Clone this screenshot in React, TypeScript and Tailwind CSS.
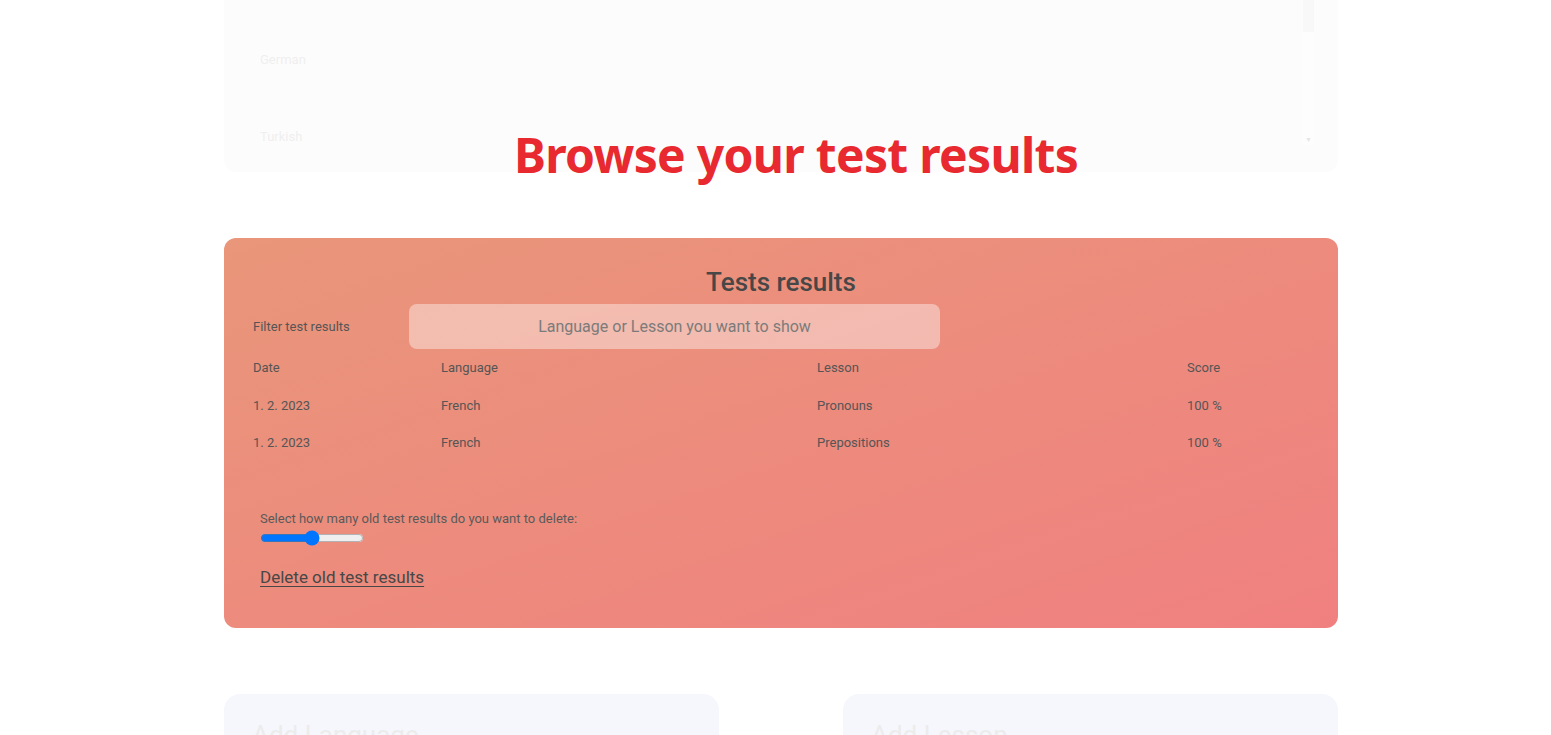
export default function App() {
  const rows = [
    { date: '1. 2. 2023', language: 'French', lesson: 'Pronouns', score: '100 %' },
    { date: '1. 2. 2023', language: 'French', lesson: 'Prepositions', score: '100 %' },
  ]

  return (
    <div className="min-h-[735px] bg-white font-['Roboto',sans-serif] overflow-hidden">
      <div className="w-[1114px] ml-[224px]">
        {/* faded language picker above */}
        <div className="h-[172px] rounded-b-[12px] bg-[#fdfcfc] flex pl-[36px] pr-[24px]">
          <div className="flex-1 flex flex-col text-[13px] text-[#efefef]">
            <div className="h-[21px]" />
            <div className="h-[77px] flex items-center pt-[2px]">German</div>
            <div className="h-[77px] flex items-center pt-[6px]">Turkish</div>
          </div>
          <div className="w-[11px] flex flex-col h-[145px] bg-[#fdfdfd]">
            <div className="h-[32px] bg-[#f8f8f8]" />
            <div className="flex-1" />
            <div className="h-[10px] text-[7px] leading-[10px] text-center text-[#e6e6e6]">▼</div>
          </div>
        </div>

        <h1 className="-mt-[48px] h-[62px] pl-[30px] text-center text-[48px] leading-[62px] font-bold text-[#e8292f] font-['Noto_Sans',sans-serif] tracking-[-0.7px]">
          Browse your test results
        </h1>

        <div className="mt-[52px] rounded-[12px] bg-gradient-to-br from-[#e9967a] to-[#f08080] px-[29px] pt-[28px] pb-[38px] text-[#505050]">
          <h2 className="h-[32px] text-center text-[26px] leading-[32px] font-medium text-[#474747]">Tests results</h2>
          <div className="mt-[6px] flex items-center">
            <div className="w-[156px] text-[13px] text-[#555]">Filter test results</div>
            <input
              className="w-[531px] h-[45px] rounded-[8px] bg-white/40 text-center text-[16px] outline-none placeholder:text-[#7b7b7b]"
              placeholder="Language or Lesson you want to show"
            />
          </div>
          <div className="text-[13px] text-[#555]">
            <div className="grid grid-cols-[188px_376px_370px_1fr] h-[37.5px] items-center">
              <div>Date</div>
              <div>Language</div>
              <div>Lesson</div>
              <div>Score</div>
            </div>
            {rows.map((r, i) => (
              <div key={i} className="grid grid-cols-[188px_376px_370px_1fr] h-[37.5px] items-center">
                <div>{r.date}</div>
                <div>{r.language}</div>
                <div>{r.lesson}</div>
                <div>{r.score}</div>
              </div>
            ))}
          </div>
          <div className="mt-[49px] px-[7px]">
            <div className="text-[13px] leading-[16px] text-[#5a5a5a]">Select how many old test results do you want to delete:</div>
            <input type="range" defaultValue={50} className="block mt-[4px] w-[104px] h-[14px] accent-[#0075ff]" />
            <a href="#" className="inline-block mt-[21px] text-[17px] leading-[22px] text-[#474747] underline underline-offset-[3px]">
              Delete old test results
            </a>
          </div>
        </div>

        <div className="mt-[66px] grid grid-cols-[495px_495px] justify-between">
          <div className="h-[120px] rounded-[16px] bg-[#f6f7fc] px-[28px] pt-[22px] text-[26px] text-[#ececec]">Add Language</div>
          <div className="h-[120px] rounded-[16px] bg-[#f6f7fc] px-[28px] pt-[22px] text-[26px] text-[#ececec]">Add Lesson</div>
        </div>
      </div>
    </div>
  )
}
